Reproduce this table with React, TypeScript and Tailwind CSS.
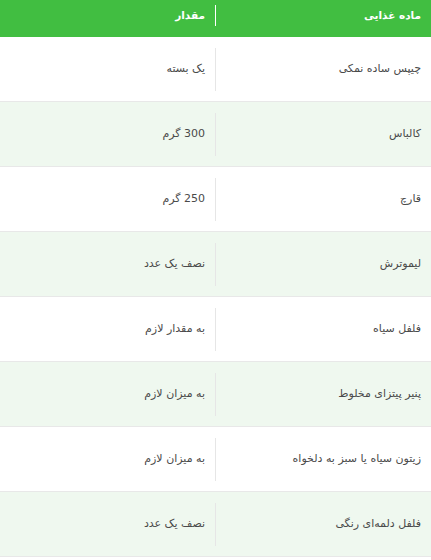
const rows: [string, string][] = [
  ["چیپس ساده نمکی", "یک بسته"],
  ["کالباس", "300 گرم"],
  ["قارچ", "250 گرم"],
  ["لیموترش", "نصف یک عدد"],
  ["فلفل سیاه", "به مقدار لازم"],
  ["پنیر پیتزای مخلوط", "به میزان لازم"],
  ["زیتون سیاه یا سبز به دلخواه", "به میزان لازم"],
  ["فلفل دلمه‌ای رنگی", "نصف یک عدد"],
];

export default function App() {
  return (
    <div
      dir="rtl"
      className="w-[431px] min-h-[560px] bg-white text-[11px] text-[#4a4a4a]"
      style={{ fontFamily: '"DejaVu Sans", "Noto Sans", sans-serif' }}
    >
      {/* header */}
      <div className="flex h-[37px] bg-[#41be41] pt-[5px] text-[10.5px] font-bold text-white">
        <div className="flex h-[21px] w-[216px] items-center border-l border-white px-[10px]">
          ماده غذایی
        </div>
        <div className="flex h-[21px] flex-1 items-center px-[10px]">مقدار</div>
      </div>

      {rows.map(([name, amount], i) => (
        <div
          key={i}
          className={`flex h-[65px] items-center border-b border-[#e8e8e8] ${
            i % 2 === 1 ? "bg-[#eff8ef]" : "bg-white"
          }`}
        >
          <div className="flex h-[43px] w-[216px] items-center border-l border-[#e6e6e6] px-[10px]">
            {name}
          </div>
          <div className="flex h-[43px] flex-1 items-center px-[10px]">{amount}</div>
        </div>
      ))}
    </div>
  );
}
